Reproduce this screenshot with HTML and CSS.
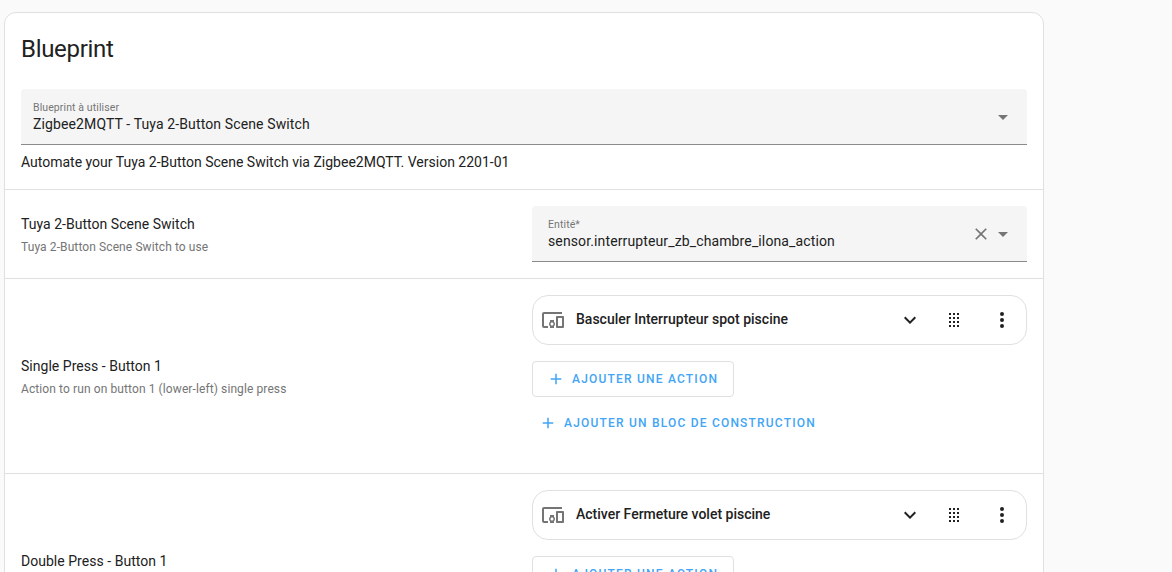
FILE: index.html
```html
<!DOCTYPE html>
<html lang="fr">
<head>
<meta charset="utf-8">
<title>Blueprint</title>
<link rel="stylesheet" href="styles.css">
</head>
<body>
<main class="card">
  <h1 class="title">Blueprint</h1>
  <section class="intro">
    <div class="field">
      <div class="field-text">
        <span class="field-label">Blueprint à utiliser</span>
        <span class="field-value">Zigbee2MQTT - Tuya 2-Button Scene Switch</span>
      </div>
      <svg class="caret" viewBox="0 0 24 24"><path d="M7 10l5 5 5-5z"/></svg>
    </div>
    <p class="desc">Automate your Tuya 2-Button Scene Switch via Zigbee2MQTT. Version 2201-01</p>
  </section>

  <section class="row row-entity">
    <div class="row-info">
      <div class="row-name">Tuya 2-Button Scene Switch</div>
      <div class="row-sub">Tuya 2-Button Scene Switch to use</div>
    </div>
    <div class="row-control">
      <div class="field field-entity">
        <div class="field-text">
          <span class="field-label">Entité*</span>
          <span class="field-value">sensor.interrupteur_zb_chambre_ilona_action</span>
        </div>
        <svg class="clear" viewBox="0 0 24 24"><path d="M19 6.41 17.59 5 12 10.59 6.41 5 5 6.41 10.59 12 5 17.59 6.41 19 12 13.41 17.59 19 19 17.59 13.41 12z"/></svg>
        <svg class="caret" viewBox="0 0 24 24"><path d="M7 10l5 5 5-5z"/></svg>
      </div>
    </div>
  </section>

  <section class="row row-action">
    <div class="row-info">
      <div class="row-name">Single Press - Button 1</div>
      <div class="row-sub">Action to run on button 1 (lower-left) single press</div>
    </div>
    <div class="row-control">
      <div class="action-card">
        <svg class="device" viewBox="0 0 24 24"><path d="M3 6h18V4H3c-1.1 0-2 .9-2 2v12c0 1.1.9 2 2 2h4v-2H3V6zm10 6H9v1.78c-.61.55-1 1.33-1 2.22s.39 1.67 1 2.22V20h4v-1.78c.61-.55 1-1.34 1-2.22s-.39-1.67-1-2.22V12zm-2 5.5c-.83 0-1.5-.67-1.5-1.5s.67-1.5 1.5-1.5 1.5.67 1.5 1.5-.67 1.5-1.5 1.5zM22 8h-6c-.5 0-1 .5-1 1v10c0 .5.5 1 1 1h6c.5 0 1-.5 1-1V9c0-.5-.5-1-1-1zm-1 10h-4v-8h4v8z"/></svg>
        <span class="action-name">Basculer Interrupteur spot piscine</span>
        <svg class="chev" viewBox="0 0 24 24"><path d="M7.41 8.58 12 13.17l4.59-4.59L18 10l-6 6-6-6z"/></svg>
        <svg class="grip" viewBox="0 0 24 24"><path d="M7 19v-2h2v2H7m4 0v-2h2v2h-2m4 0v-2h2v2h-2m-8-4v-2h2v2H7m4 0v-2h2v2h-2m4 0v-2h2v2h-2m-8-4V9h2v2H7m4 0V9h2v2h-2m4 0V9h2v2h-2M7 7V5h2v2H7m4 0V5h2v2h-2m4 0V5h2v2h-2z"/></svg>
        <svg class="more" viewBox="0 0 24 24"><path d="M12 16a2 2 0 1 1 0 4 2 2 0 0 1 0-4m0-6a2 2 0 1 1 0 4 2 2 0 0 1 0-4m0-6a2 2 0 1 1 0 4 2 2 0 0 1 0-4z"/></svg>
      </div>
      <button class="btn btn-outlined"><svg class="plus" viewBox="0 0 24 24"><path d="M19 13h-6v6h-2v-6H5v-2h6V5h2v6h6v2z"/></svg>Ajouter une action</button>
      <button class="btn btn-text"><svg class="plus" viewBox="0 0 24 24"><path d="M19 13h-6v6h-2v-6H5v-2h6V5h2v6h6v2z"/></svg>Ajouter un bloc de construction</button>
    </div>
  </section>

  <section class="row row-action">
    <div class="row-info">
      <div class="row-name">Double Press - Button 1</div>
      <div class="row-sub">Action to run on button 1 (lower-left) double press</div>
    </div>
    <div class="row-control">
      <div class="action-card">
        <svg class="device" viewBox="0 0 24 24"><path d="M3 6h18V4H3c-1.1 0-2 .9-2 2v12c0 1.1.9 2 2 2h4v-2H3V6zm10 6H9v1.78c-.61.55-1 1.33-1 2.22s.39 1.67 1 2.22V20h4v-1.78c.61-.55 1-1.34 1-2.22s-.39-1.67-1-2.22V12zm-2 5.5c-.83 0-1.5-.67-1.5-1.5s.67-1.5 1.5-1.5 1.5.67 1.5 1.5-.67 1.5-1.5 1.5zM22 8h-6c-.5 0-1 .5-1 1v10c0 .5.5 1 1 1h6c.5 0 1-.5 1-1V9c0-.5-.5-1-1-1zm-1 10h-4v-8h4v8z"/></svg>
        <span class="action-name">Activer Fermeture volet piscine</span>
        <svg class="chev" viewBox="0 0 24 24"><path d="M7.41 8.58 12 13.17l4.59-4.59L18 10l-6 6-6-6z"/></svg>
        <svg class="grip" viewBox="0 0 24 24"><path d="M7 19v-2h2v2H7m4 0v-2h2v2h-2m4 0v-2h2v2h-2m-8-4v-2h2v2H7m4 0v-2h2v2h-2m4 0v-2h2v2h-2m-8-4V9h2v2H7m4 0V9h2v2h-2m4 0V9h2v2h-2M7 7V5h2v2H7m4 0V5h2v2h-2m4 0V5h2v2h-2z"/></svg>
        <svg class="more" viewBox="0 0 24 24"><path d="M12 16a2 2 0 1 1 0 4 2 2 0 0 1 0-4m0-6a2 2 0 1 1 0 4 2 2 0 0 1 0-4m0-6a2 2 0 1 1 0 4 2 2 0 0 1 0-4z"/></svg>
      </div>
      <button class="btn btn-outlined"><svg class="plus" viewBox="0 0 24 24"><path d="M19 13h-6v6h-2v-6H5v-2h6V5h2v6h6v2z"/></svg>Ajouter une action</button>
      <button class="btn btn-text"><svg class="plus" viewBox="0 0 24 24"><path d="M19 13h-6v6h-2v-6H5v-2h6V5h2v6h6v2z"/></svg>Ajouter un bloc de construction</button>
    </div>
  </section>
</main>
</body>
</html>
```

FILE: styles.css
```css
* { box-sizing: border-box; }

html, body {
  margin: 0;
  height: 572px;
  overflow: hidden;
}

body {
  background: #fafafa;
  padding: 12px 128px 0 4px;
  font-family: Roboto, "Liberation Sans", sans-serif;
  color: #212121;
}

.card {
  width: 1040px;
  background: #fff;
  border: 1px solid #e0e0e0;
  border-radius: 12px;
}

.title {
  margin: 0;
  padding: 20px 16px 0;
  height: 76px;
  font-size: 24px;
  font-weight: 400;
  line-height: 32px;
  letter-spacing: -0.3px;
}

.intro {
  padding: 0 16px;
  height: 101px;
  border-bottom: 1px solid #e0e0e0;
}

.desc {
  margin: 0;
  padding-top: 7px;
  font-size: 14px;
  line-height: 20px;
}

.field {
  height: 56px;
  display: flex;
  align-items: center;
  background: #f5f5f5;
  border-bottom: 1px solid #8a8a8a;
  border-radius: 4px 4px 0 0;
  padding: 0 12px;
}

.field-entity { padding-left: 16px; }

.field-text {
  flex: 1;
  display: flex;
  flex-direction: column;
  padding-top: 2px;
  min-width: 0;
}

.field-label {
  font-size: 10.5px;
  line-height: 12px;
  letter-spacing: 0.1px;
  color: #757575;
}

.field-value {
  font-size: 14px;
  line-height: 20px;
  color: #212121;
  letter-spacing: 0.125px;
}

.caret {
  width: 24px;
  height: 24px;
  fill: #757575;
}

.clear {
  width: 20px;
  height: 20px;
  fill: #757575;
}

.row {
  display: flex;
  border-bottom: 1px solid #e0e0e0;
  padding: 16px;
}

.row:last-child { border-bottom: 0; }

.row-entity { height: 89px; }
.row-action { height: 195px; }

.row-info {
  flex: 1;
  padding-top: 2px;
  align-self: center;
  min-width: 0;
}

.row-name {
  font-size: 14px;
  line-height: 20px;
  letter-spacing: 0.03px;
}

.row-sub {
  margin-top: 3px;
  font-size: 12px;
  line-height: 20px;
  color: #757575;
  letter-spacing: 0.1px;
}

.row-control {
  width: 495px;
  flex: none;
  display: flex;
  flex-direction: column;
  align-items: flex-start;
}

.row-control .field { width: 100%; }

.action-card {
  width: 100%;
  height: 50px;
  display: flex;
  align-items: center;
  border: 1px solid #e0e0e0;
  border-radius: 16px;
  padding: 0 12px 0 8px;
  flex: none;
}

.device {
  width: 24px;
  height: 24px;
  fill: #757575;
  margin-right: 11px;
  flex: none;
}

.action-name {
  flex: 1;
  font-size: 14px;
  font-weight: 500;
  line-height: 20px;
  margin-top: -2px;
}

.chev, .grip, .more {
  width: 24px;
  height: 24px;
  fill: #212121;
  flex: none;
}

.chev { margin-right: 20px; }
.grip { margin-right: 24px; }

.btn {
  display: inline-flex;
  align-items: center;
  font-family: inherit;
  font-size: 12px;
  font-weight: 500;
  letter-spacing: 1.2px;
  text-transform: uppercase;
  color: #42a5f5;
  background: none;
  cursor: pointer;
  flex: none;
}

.btn-outlined {
  height: 36px;
  margin-top: 16px;
  padding: 0 15px 0 16px;
  border: 1px solid #e0e0e0;
  border-radius: 4px;
}

.btn-text {
  height: 36px;
  margin-top: 8px;
  padding: 0 8px 0 9px;
  border: 0;
}

.plus {
  width: 18px;
  height: 18px;
  fill: #42a5f5;
  margin-right: 7px;
  margin-left: -2px;
}
```
